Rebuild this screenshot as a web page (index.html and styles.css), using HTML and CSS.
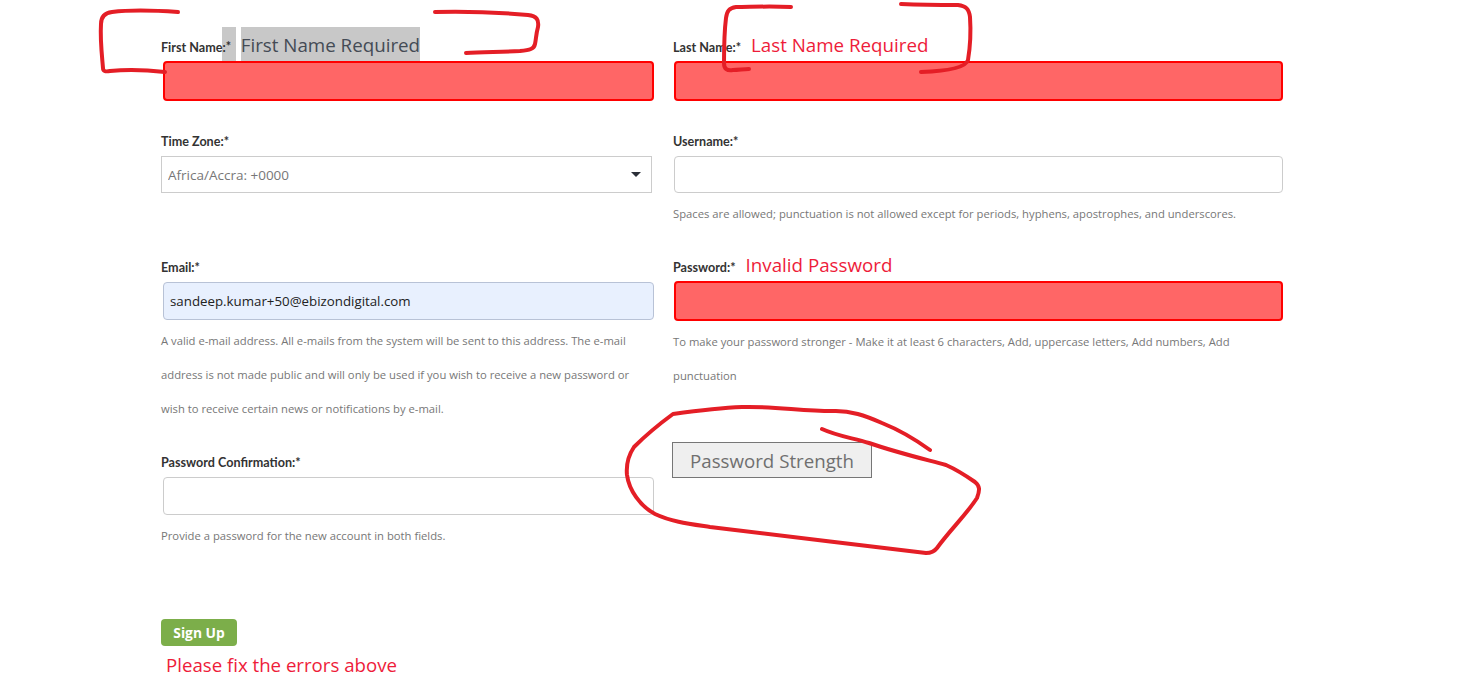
FILE: index.html
```html
<!DOCTYPE html>
<html lang="en">

<head>
    <meta charset="UTF-8">
    <meta name="viewport" content="width=device-width, initial-scale=1.0">
    <title>Sign Up</title>
    <link rel="stylesheet" href="styles.css">
</head>

<body>

    <form class="signup">
        <div class="columns">
            <div class="col col-left">
                <div class="label-row">
                    <label for="first-name" class="label-over">First Name:</label>
                    <span class="selected star">*</span>
                    <span class="error-text selected">First Name Required</span>
                </div>
                <input type="text" id="first-name" class="field field-error field-inset">

                <div class="form-group group-timezone">
                    <label for="timezone">Time Zone:*</label>
                    <div class="select-wrap">
                        <select id="timezone" class="field-select">
                            <option>Africa/Accra: +0000</option>
                        </select>
                    </div>
                </div>

                <div class="form-group group-email">
                    <label for="email">Email:*</label>
                    <input type="text" id="email" class="field field-autofill field-inset" value="sandeep.kumar+50@ebizondigital.com">
                    <p class="help help-email">A valid e-mail address. All e-mails from the system will be sent to this address. The e-mail address is not made public and will only be used if you wish to receive a new password or wish to receive certain news or notifications by e-mail.</p>
                </div>

                <div class="form-group group-confirm">
                    <label for="confirm">Password Confirmation:*</label>
                    <input type="password" id="confirm" class="field field-inset">
                    <p class="help">Provide a password for the new account in both fields.</p>
                </div>
            </div>

            <div class="col col-right">
                <div class="label-row">
                    <label for="last-name">Last Name:*</label>
                    <span class="error-text error-red">Last Name Required</span>
                </div>
                <input type="text" id="last-name" class="field field-error">

                <div class="form-group group-timezone">
                    <label for="username">Username:*</label>
                    <input type="text" id="username" class="field field-short">
                    <p class="help">Spaces are allowed; punctuation is not allowed except for periods, hyphens, apostrophes, and underscores.</p>
                </div>

                <div class="label-row row-password">
                    <label for="password">Password:*</label>
                    <span class="error-text error-red">Invalid Password</span>
                </div>
                <input type="password" id="password" class="field field-error">
                <p class="help help-password">To make your password stronger - Make it at least 6 characters, Add, uppercase letters, Add numbers, Add punctuation</p>

                <div class="strength">Password Strength</div>
            </div>
        </div>

        <button type="button" class="btn-signup">Sign Up</button>
        <p class="form-error">Please fix the errors above</p>
    </form>

    <!-- marker scribbles drawn on top of the screenshot -->
    <svg class="scribbles" width="1479" height="685" viewBox="0 0 1479 685" fill="none" stroke="#e41e26" stroke-width="4" stroke-linecap="round" stroke-linejoin="round">
        <path d="M178 12 C150 10 128 10 112 12 C104 13 101 17 101 24 C100 40 102 56 103 68 C103 71 105 72 110 71 C128 69 148 70 165 72"/>
        <path d="M435 12 C470 11 505 13 528 15 C537 16 539 20 538 27 C536 34 536 40 535 44 C534 49 530 50 520 51 C500 52 482 52 466 53"/>
        <path d="M791 7 C768 6 750 7 736 7 C729 8 727 11 726 18 C724 34 724 50 724 63 C724 69 727 71 733 70 C738 70 744 69 749 69"/>
        <path d="M901 4 C925 5 945 5 958 5 C966 6 969 9 970 17 C971 32 970 48 968 60 C966 67 950 71 921 72"/>
        <path d="M930 450 C912 437 897 429 882 423 C866 416 850 410 832 411 C802 411 772 406 742 407 C718 408 695 411 673 414 C658 425 645 436 634 447 C628 456 626 465 627 475 C629 490 640 506 655 514 C672 522 690 524 710 527 C780 536 855 544 926 553 C931 553 934 552 937 548 C950 530 966 515 977 498 C980 490 980 486 975 482 C965 475 955 469 946 465 C920 458 895 452 869 443 C853 438 837 436 822 429"/>
    </svg>

</body>

</html>
```

FILE: styles.css
```css
body {
    font-family: 'Open Sans', sans-serif;
    background-color: #fff;
    color: #333;
    margin: 0;
    padding: 0;
    overflow: hidden;
}

.signup {
    padding: 27px 0 0 161px;
}

.columns {
    display: flex;
}

.col-left {
    width: 512px;
}

.col-right {
    width: 610px;
}

label {
    display: block;
    font-family: 'Lato', sans-serif;
    font-size: 12.6px;
    line-height: 18px;
    font-weight: 700;
    color: #333;
}

.label-over {
    position: relative;
}

.label-row {
    display: flex;
    align-items: baseline;
    height: 34px;
}

.selected {
    background-color: #c8c8c8;
}

.star {
    box-sizing: border-box;
    align-self: flex-start;
    width: 14px;
    height: 34px;
    margin-left: -4px;
    padding: 12px 0 0 4px;
    font-family: 'Lato', sans-serif;
    font-size: 12.6px;
    font-weight: 700;
    line-height: 16px;
}

.error-text {
    padding-top: 2px;
    font-size: 18.75px;
    line-height: 32px;
    color: #444b55;
    margin-left: 5px;
}

.error-red {
    color: #ee1c3a;
    margin-left: 10px;
}

.field {
    display: block;
    box-sizing: border-box;
    width: 609px;
    height: 40px;
    margin: 0 0 0 1px;
    padding: 0 6px;
    font-family: 'Open Sans', sans-serif;
    font-size: 13.3px;
    color: #222;
    background: #fff;
    border: 1px solid #ccc;
    border-radius: 4px;
}

.field-inset {
    width: 491px;
    margin-left: 2px;
    height: 38px;
}

.field-error {
    height: 40px;
    background-color: #ff6666;
    border: 2px solid #f00;
}

.field-short {
    height: 37px;
}

.field-autofill {
    background-color: #e8f0fe;
    border-color: #b8c2d6;
}

.form-group label {
    margin-bottom: 5px;
}

.group-timezone {
    margin-top: 32px;
}

.group-email {
    margin-top: 66px;
}

.group-confirm {
    margin-top: 29px;
}

.select-wrap {
    position: relative;
    width: 491px;
}

.select-wrap::after {
    content: "";
    position: absolute;
    top: 16px;
    right: 11px;
    border-left: 5px solid transparent;
    border-right: 5px solid transparent;
    border-top: 5px solid #2b2f38;
}

.field-select {
    display: block;
    box-sizing: border-box;
    width: 100%;
    height: 37px;
    padding: 0 6px;
    font-family: 'Open Sans', sans-serif;
    font-size: 13.5px;
    color: #777;
    background: #fff;
    border: 1px solid #ccc;
    border-radius: 0;
    appearance: none;
}

.help {
    margin: 4px 0 -1px;
    font-size: 11.25px;
    line-height: 34px;
    color: #777;
}

.help-email {
    width: 490px;
}

.row-password {
    margin-top: 17px;
}

.help-password {
    width: 590px;
}

.strength {
    box-sizing: border-box;
    width: 200px;
    height: 36px;
    margin: 50px 0 0 -1px;
    font-size: 18.7px;
    line-height: 35px;
    text-align: center;
    color: #6f6f6f;
    background-color: #efefef;
    border: 1px solid #767676;
}

.btn-signup {
    display: block;
    width: 76px;
    height: 27px;
    margin-top: 67px;
    padding: 0;
    font-family: 'Open Sans', sans-serif;
    font-size: 13.8px;
    font-weight: 700;
    color: #fff;
    background-color: #7cae4a;
    border: none;
    border-radius: 4px;
    cursor: pointer;
}

.form-error {
    margin: 7px 0 0 5px;
    font-size: 18.65px;
    line-height: 24px;
    color: #ee1c3a;
}

.scribbles {
    position: absolute;
    top: 0;
    left: 0;
    pointer-events: none;
}
```
